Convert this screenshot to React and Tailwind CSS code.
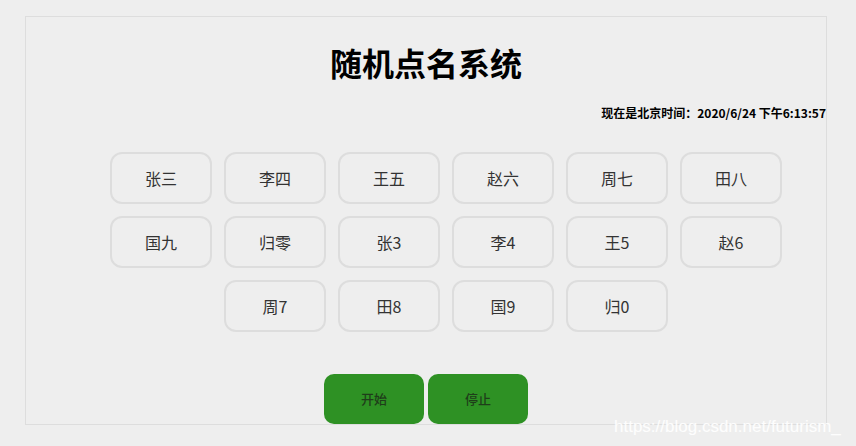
const names = [
  '张三', '李四', '王五', '赵六', '周七', '田八',
  '国九', '归零', '张3', '李4', '王5', '赵6',
  '周7', '田8', '国9', '归0',
]

const font = { fontFamily: '"Noto Sans CJK SC", "Noto Sans", sans-serif' }

export default function App() {
  return (
    <div className="relative w-full h-[446px] bg-[#eeeeee] pt-[16px] pl-[25px] overflow-hidden" style={font}>
      {/* 主面板 */}
      <div className="w-[802px] h-[409px] border border-[#dddddd] flex flex-col">
        <h1 className="mt-[21px] text-center text-[32px] leading-[48px] font-bold text-black">
          随机点名系统
        </h1>
        <p className="mt-[19px] text-right text-[12px] leading-[16px] font-bold text-black">
          现在是北京时间：2020/6/24 下午6:13:57
        </p>

        {/* 名单 */}
        <div className="mt-[25px] ml-[78px] w-[684px] flex flex-wrap justify-center">
          {names.map(n => (
            <div
              key={n}
              className="w-[102px] h-[52px] m-[6px] border-2 border-[#dddddd] rounded-[12px] flex items-center justify-center text-[16px] text-[#333333]"
            >
              {n}
            </div>
          ))}
        </div>

        {/* 按钮 */}
        <div className="mt-auto flex justify-center gap-[4px]">
          <button className="w-[100px] h-[50px] rounded-[10px] bg-[#2e9124] text-[13px] font-medium text-[#1f3d1a]">
            开始
          </button>
          <button className="w-[100px] h-[50px] rounded-[10px] bg-[#2e9124] text-[13px] font-medium text-[#1f3d1a]">
            停止
          </button>
        </div>
      </div>

      {/* 水印 */}
      <span
        className="absolute left-[614px] top-[415px] text-[17px] leading-[24px] text-white/90"
        style={{ fontFamily: '"Liberation Sans", Arial, sans-serif' }}
      >
        https://blog.csdn.net/futurism_
      </span>
    </div>
  )
}
